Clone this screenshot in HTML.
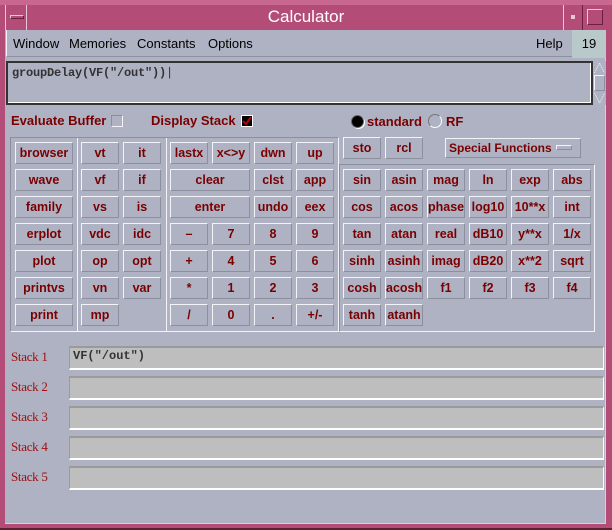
<!DOCTYPE html>
<html><head><meta charset="utf-8"><style>
*{box-sizing:border-box;margin:0;padding:0}
body{width:612px;height:530px;overflow:hidden;background:#b34d77;position:relative;font-family:"Liberation Sans",sans-serif}
.a{position:absolute}
.win{left:5px;top:30px;width:601px;height:494px;background:#aeb2c3;border-right:1px solid #e8c8d4;border-bottom:1px solid #e8c8d4}
.b{position:absolute;height:22px;background:#aeb2c3;border-top:1px solid #f4f4f8;border-left:1px solid #f4f4f8;border-right:1px solid #8c8f9e;border-bottom:1px solid #8c8f9e;color:#7a0000;font-weight:bold;font-size:12.5px;text-align:center;line-height:20px;white-space:nowrap;overflow:hidden}
.fr{position:absolute;border-top:1px solid #8c8f9e;border-left:1px solid #8c8f9e;border-right:1px solid #f4f4f8;border-bottom:1px solid #f4f4f8}
.lbl{position:absolute;left:11px;color:#a01010;font-family:"Liberation Serif",serif;font-size:13px;letter-spacing:-0.3px}
.fld{position:absolute;left:69px;width:535px;height:24px;background:#bebebe;border-top:2px solid #9a9a9a;border-bottom:2px solid #fff;border-left:1px solid #9a9a9a;border-right:1px solid #fff}
.m{position:absolute;top:36px;font-size:13px;color:#000}
.red{color:#7a0000;font-weight:bold;font-size:13px;position:absolute}
</style></head><body>
<div class="a" style="left:0;top:0;width:612px;height:5px;background:#c86890"></div>
<div class="a" style="left:5px;top:5px;width:1px;height:25px;background:#e8c8d4"></div>
<div class="a" style="left:26px;top:5px;width:1px;height:25px;background:#e8c8d4"></div>
<div class="a" style="left:10px;top:15px;width:14px;height:4px;border:1px solid #e8c8d4;border-right-color:#6a2040;border-bottom-color:#6a2040"></div>
<div class="a" style="left:0;top:7px;width:612px;text-align:center;color:#fff;font-size:17px">Calculator</div>
<div class="a" style="left:582px;top:5px;width:1px;height:25px;background:#6a2040"></div>
<div class="a" style="left:563px;top:5px;width:1px;height:25px;background:#e8c8d4"></div>
<div class="a" style="left:571px;top:15px;width:4px;height:4px;background:#e8c8d4"></div>
<div class="a" style="left:587px;top:9px;width:16px;height:16px;border:1px solid #e8c8d4;border-right-color:#6a2040;border-bottom-color:#6a2040"></div>
<div class="win a"></div>
<div class="a" style="left:6px;top:30px;width:566px;height:27px;border-bottom:1px solid #8c8f9e;border-left:1px solid #f4f4f8"></div>
<div class="m" style="left:13px">Window</div>
<div class="m" style="left:69px">Memories</div>
<div class="m" style="left:137px">Constants</div>
<div class="m" style="left:208px">Options</div>
<div class="m" style="left:536px">Help</div>
<div class="a" style="left:572px;top:30px;width:34px;height:28px;background:#b9c9c9;font-size:13px;text-align:center;line-height:28px">19</div>
<div class="a" style="left:6px;top:61px;width:587px;height:44px;border:2px solid #333;background:#aeb2c3"><div style="position:absolute;left:0;top:0;right:0;bottom:0;border-right:1px solid #fff;border-bottom:1px solid #fff"></div></div>
<div class="a" style="left:12px;top:66px;font-family:'Liberation Mono',monospace;font-weight:bold;font-size:12px;color:#333;letter-spacing:-0.2px">groupDelay(VF("/out"))<span style="font-weight:normal">|</span></div>
<div class="a" style="left:593px;top:61px;width:13px;height:44px;background:#aeb2c3"></div>
<svg class="a" style="left:593px;top:61px" width="13" height="44"><path d="M1.5 12 L6.5 2 L11.5 12 M1.5 32 L6.5 42 L11.5 32" fill="none" stroke="#f4f4f8" stroke-dasharray="1 1"/></svg>
<div class="a" style="left:594px;top:75px;width:11px;height:16px;border:1px solid #f4f4f8;border-right-color:#8c8f9e;border-bottom-color:#8c8f9e"></div>
<div class="red" style="left:11px;top:113px">Evaluate Buffer</div>
<div class="a" style="left:111px;top:115px;width:12px;height:12px;border:1px solid #8c8f9e;border-right-color:#f4f4f8;border-bottom-color:#f4f4f8"></div>
<div class="red" style="left:151px;top:113px">Display Stack</div>
<div class="a" style="left:241px;top:115px;width:12px;height:12px;background:#000;border:1px solid #fff"></div>
<svg class="a" style="left:242px;top:116px" width="10" height="10"><path d="M1 5 L4 8 L9 1" fill="none" stroke="#c00000" stroke-width="2"/></svg>
<div class="a" style="left:351px;top:115px;width:13px;height:13px;border-radius:50%;background:#000;border:1px solid #666;box-shadow:1px 1px 0 #fff"></div>
<div class="red" style="left:367px;top:114px">standard</div>
<div class="a" style="left:428px;top:114px;width:14px;height:14px;border-radius:50%;border:1px solid #fff;border-top-color:#777;border-left-color:#777"></div>
<div class="red" style="left:446px;top:114px">RF</div>
<div class="fr" style="left:10px;top:137px;width:329px;height:195px"></div>
<div class="a" style="left:77px;top:138px;width:1px;height:193px;background:#f4f4f8"></div>
<div class="a" style="left:166px;top:138px;width:1px;height:193px;background:#f4f4f8"></div>
<div class="b" style="left:15px;top:142px;width:58px">browser</div>
<div class="b" style="left:15px;top:169px;width:58px">wave</div>
<div class="b" style="left:15px;top:196px;width:58px">family</div>
<div class="b" style="left:15px;top:223px;width:58px">erplot</div>
<div class="b" style="left:15px;top:250px;width:58px">plot</div>
<div class="b" style="left:15px;top:277px;width:58px">printvs</div>
<div class="b" style="left:15px;top:304px;width:58px">print</div>
<div class="b" style="left:81px;top:142px;width:38px">vt</div>
<div class="b" style="left:123px;top:142px;width:38px">it</div>
<div class="b" style="left:81px;top:169px;width:38px">vf</div>
<div class="b" style="left:123px;top:169px;width:38px">if</div>
<div class="b" style="left:81px;top:196px;width:38px">vs</div>
<div class="b" style="left:123px;top:196px;width:38px">is</div>
<div class="b" style="left:81px;top:223px;width:38px">vdc</div>
<div class="b" style="left:123px;top:223px;width:38px">idc</div>
<div class="b" style="left:81px;top:250px;width:38px">op</div>
<div class="b" style="left:123px;top:250px;width:38px">opt</div>
<div class="b" style="left:81px;top:277px;width:38px">vn</div>
<div class="b" style="left:123px;top:277px;width:38px">var</div>
<div class="b" style="left:81px;top:304px;width:38px">mp</div>
<div class="b" style="left:170px;top:142px;width:38px">lastx</div>
<div class="b" style="left:212px;top:142px;width:38px">x&lt;&gt;y</div>
<div class="b" style="left:254px;top:142px;width:38px">dwn</div>
<div class="b" style="left:296px;top:142px;width:38px">up</div>
<div class="b" style="left:170px;top:169px;width:80px">clear</div>
<div class="b" style="left:254px;top:169px;width:38px">clst</div>
<div class="b" style="left:296px;top:169px;width:38px">app</div>
<div class="b" style="left:170px;top:196px;width:80px">enter</div>
<div class="b" style="left:254px;top:196px;width:38px">undo</div>
<div class="b" style="left:296px;top:196px;width:38px">eex</div>
<div class="b" style="left:170px;top:223px;width:38px">–</div>
<div class="b" style="left:212px;top:223px;width:38px">7</div>
<div class="b" style="left:254px;top:223px;width:38px">8</div>
<div class="b" style="left:296px;top:223px;width:38px">9</div>
<div class="b" style="left:170px;top:250px;width:38px">+</div>
<div class="b" style="left:212px;top:250px;width:38px">4</div>
<div class="b" style="left:254px;top:250px;width:38px">5</div>
<div class="b" style="left:296px;top:250px;width:38px">6</div>
<div class="b" style="left:170px;top:277px;width:38px">*</div>
<div class="b" style="left:212px;top:277px;width:38px">1</div>
<div class="b" style="left:254px;top:277px;width:38px">2</div>
<div class="b" style="left:296px;top:277px;width:38px">3</div>
<div class="b" style="left:170px;top:304px;width:38px">/</div>
<div class="b" style="left:212px;top:304px;width:38px">0</div>
<div class="b" style="left:254px;top:304px;width:38px">.</div>
<div class="b" style="left:296px;top:304px;width:38px">+/-</div>
<div class="b" style="left:343px;top:137px;width:38px">sto</div>
<div class="b" style="left:385px;top:137px;width:38px">rcl</div>
<div class="b" style="left:445px;top:138px;width:136px;height:20px;text-align:left;padding-left:3px;line-height:18px;font-size:12px">Special Functions<span style="position:absolute;left:110px;top:6px;width:16px;height:5px;border:1px solid #f4f4f8;border-right-color:#8c8f9e;border-bottom-color:#8c8f9e"></span></div>
<div class="fr" style="left:339px;top:164px;width:256px;height:168px"></div>
<div class="b" style="left:343px;top:169px;width:38px">sin</div>
<div class="b" style="left:385px;top:169px;width:38px">asin</div>
<div class="b" style="left:427px;top:169px;width:38px">mag</div>
<div class="b" style="left:469px;top:169px;width:38px">ln</div>
<div class="b" style="left:511px;top:169px;width:38px">exp</div>
<div class="b" style="left:553px;top:169px;width:38px">abs</div>
<div class="b" style="left:343px;top:196px;width:38px">cos</div>
<div class="b" style="left:385px;top:196px;width:38px">acos</div>
<div class="b" style="left:427px;top:196px;width:38px">phase</div>
<div class="b" style="left:469px;top:196px;width:38px">log10</div>
<div class="b" style="left:511px;top:196px;width:38px">10**x</div>
<div class="b" style="left:553px;top:196px;width:38px">int</div>
<div class="b" style="left:343px;top:223px;width:38px">tan</div>
<div class="b" style="left:385px;top:223px;width:38px">atan</div>
<div class="b" style="left:427px;top:223px;width:38px">real</div>
<div class="b" style="left:469px;top:223px;width:38px">dB10</div>
<div class="b" style="left:511px;top:223px;width:38px">y**x</div>
<div class="b" style="left:553px;top:223px;width:38px">1/x</div>
<div class="b" style="left:343px;top:250px;width:38px">sinh</div>
<div class="b" style="left:385px;top:250px;width:38px">asinh</div>
<div class="b" style="left:427px;top:250px;width:38px">imag</div>
<div class="b" style="left:469px;top:250px;width:38px">dB20</div>
<div class="b" style="left:511px;top:250px;width:38px">x**2</div>
<div class="b" style="left:553px;top:250px;width:38px">sqrt</div>
<div class="b" style="left:343px;top:277px;width:38px">cosh</div>
<div class="b" style="left:385px;top:277px;width:38px">acosh</div>
<div class="b" style="left:427px;top:277px;width:38px">f1</div>
<div class="b" style="left:469px;top:277px;width:38px">f2</div>
<div class="b" style="left:511px;top:277px;width:38px">f3</div>
<div class="b" style="left:553px;top:277px;width:38px">f4</div>
<div class="b" style="left:343px;top:304px;width:38px">tanh</div>
<div class="b" style="left:385px;top:304px;width:38px">atanh</div>
<div class="lbl" style="top:349px">Stack 1</div>
<div class="fld" style="top:346px"><span style="position:absolute;left:3px;top:1px;font-family:'Liberation Mono',monospace;font-weight:bold;font-size:12px;color:#333">VF("/out")</span></div>
<div class="lbl" style="top:379px">Stack 2</div>
<div class="fld" style="top:376px"></div>
<div class="lbl" style="top:409px">Stack 3</div>
<div class="fld" style="top:406px"></div>
<div class="lbl" style="top:439px">Stack 4</div>
<div class="fld" style="top:436px"></div>
<div class="lbl" style="top:469px">Stack 5</div>
<div class="fld" style="top:466px"></div>
<div class="a" style="left:0;top:528px;width:612px;height:2px;background:#5a2038"></div>
</body></html>
